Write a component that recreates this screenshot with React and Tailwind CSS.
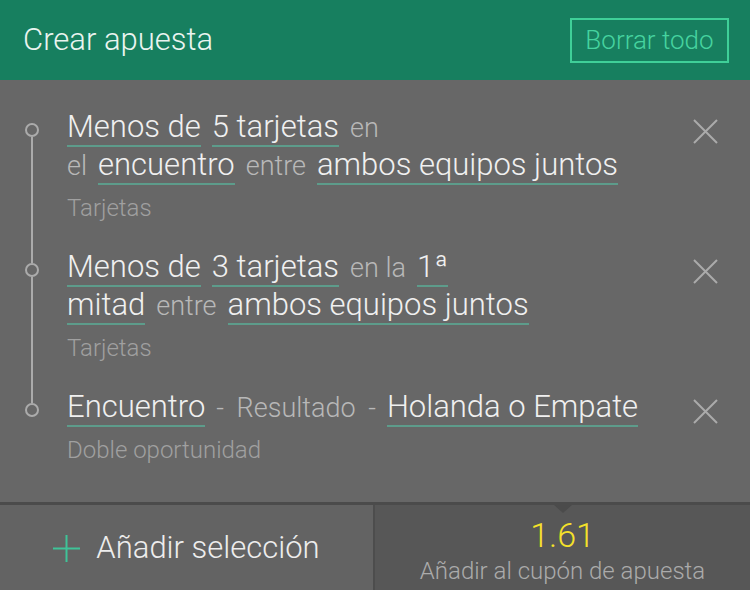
import React from "react";

const F = { fontFamily: "Roboto, 'Liberation Sans', sans-serif" };

function Hi({ children }) {
  return (
    <span className="text-[31px] font-light leading-[36px] text-[#f0f0f0] border-b-2 border-[#5d9c8b] whitespace-nowrap">
      {children}
    </span>
  );
}
function Lo({ children, wide }) {
  return (
    <span className={"text-[27px] font-light leading-[36px] text-[#b8b8b8] whitespace-pre " + (wide ? "[word-spacing:6px]" : "")}>
      {children}
    </span>
  );
}
function Line({ children }) {
  return <div className="flex items-baseline gap-[11px] h-[38px]">{children}</div>;
}

function XIcon() {
  return (
    <svg width="25" height="25" viewBox="0 0 25 25" className="block">
      <path d="M1 1 L24 24 M24 1 L1 24" stroke="#ababab" strokeWidth="2" fill="none" />
    </svg>
  );
}

function Item({ first, last, lines, label, pb }) {
  return (
    <div className="flex">
      <div className="w-[67px] flex flex-col items-start pl-[25px] shrink-0">
        <div className={"ml-[6px] w-[2px] h-[14px] " + (first ? "" : "bg-[#ababab]")} />
        <div className="w-[14px] h-[14px] rounded-full border-2 border-[#ababab]" />
        <div className={"ml-[6px] w-[2px] flex-1 " + (last ? "" : "bg-[#ababab]")} />
      </div>
      <div className={"flex-1 " + pb}>
        {lines.map((l, i) => (
          <Line key={i}>{l}</Line>
        ))}
        <div className="mt-[9px] text-[24px] font-light leading-[28px] text-[#a0a0a0]">{label}</div>
      </div>
      <div className="pt-[10px] pr-[32px]">
        <XIcon />
      </div>
    </div>
  );
}

export default function App() {
  return (
    <div style={F} className="w-[750px] h-[590px] flex flex-col bg-[#676767] overflow-hidden">
      <div className="h-[80px] bg-[#177f5f] flex items-center justify-between pl-[23px] pr-[21px] shrink-0">
        <div className="text-[31px] font-light text-[#eaf4f0]">Crear apuesta</div>
        <div className="w-[159px] h-[45px] border-2 border-[#3fcf98] flex items-center justify-center text-[26px] font-light text-[#46d39f]">
          Borrar todo
        </div>
      </div>
      <div className="flex-1 pt-[29px]">
        <Item
          first
          pb="pb-[27px]"
          label="Tarjetas"
          lines={[
            [<Hi key="a">Menos de</Hi>, <Hi key="b">5 tarjetas</Hi>, <Lo key="c">en</Lo>],
            [<Lo key="a">el</Lo>, <Hi key="b">encuentro</Hi>, <Lo key="c">entre</Lo>, <Hi key="d">ambos equipos juntos</Hi>],
          ]}
        />
        <Item
          pb="pb-[27px]"
          label="Tarjetas"
          lines={[
            [<Hi key="a">Menos de</Hi>, <Hi key="b">3 tarjetas</Hi>, <Lo key="c">en la</Lo>, <Hi key="d">1ª</Hi>],
            [<Hi key="a">mitad</Hi>, <Lo key="c">entre</Lo>, <Hi key="d">ambos equipos juntos</Hi>],
          ]}
        />
        <Item
          last
          pb="pb-[20px]"
          label="Doble oportunidad"
          lines={[
            [<Hi key="a">Encuentro</Hi>, <Lo key="c" wide>- Resultado -</Lo>, <Hi key="d">Holanda o Empate</Hi>],
          ]}
        />
      </div>
      <div className="h-[88px] border-t-[3px] border-[#4b4b4b] flex shrink-0">
        <div className="w-[373px] bg-[#636363] flex items-center justify-center gap-[16px] pt-[2px]">
          <svg width="27" height="27" viewBox="0 0 27 27" className="block">
            <path d="M13.5 0 V27 M0 13.5 H27" stroke="#3fc398" strokeWidth="2" fill="none" />
          </svg>
          <span className="text-[31px] font-light text-[#ededed]">Añadir selección</span>
        </div>
        <div className="flex-1 relative bg-[#575757] border-l-2 border-[#4d4d4d] flex flex-col items-center pt-[12px]">
          <div className="absolute top-0 left-1/2 -translate-x-1/2 w-0 h-0 border-l-[9px] border-r-[9px] border-t-[8px] border-l-transparent border-r-transparent border-t-[#4b4b4b]" />
          <div className="text-[34px] font-light leading-[36px] text-[#f5e12a]">1.61</div>
          <div className="mt-[4px] text-[24px] font-light leading-[28px] text-[#ababab]">Añadir al cupón de apuesta</div>
        </div>
      </div>
    </div>
  );
}
